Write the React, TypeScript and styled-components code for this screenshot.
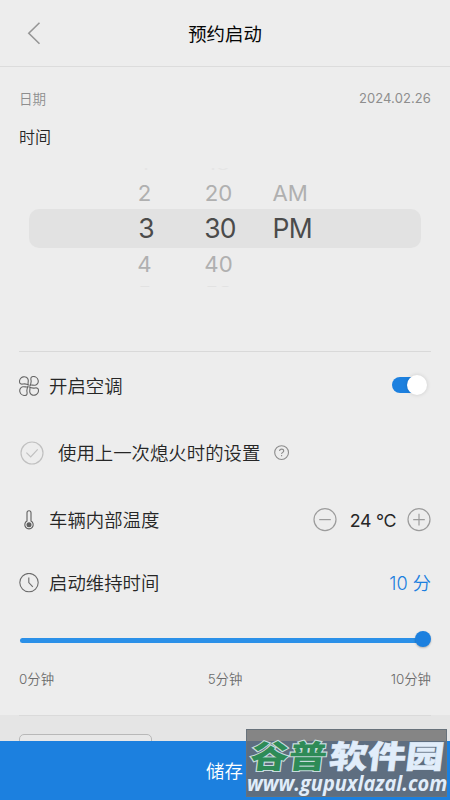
import React from "react";
import styled, { createGlobalStyle } from "styled-components";

const GlobalStyle = createGlobalStyle`
  * { box-sizing: border-box; }
  body {
    margin: 0;
    background: #ededed;
    font-family: Inter, "Noto Sans CJK SC", sans-serif;
    font-weight: 350;
    color: #262626;
  }
`;

const Screen = styled.main`
  position: relative;
  display: flex;
  flex-direction: column;
  width: 450px;
  height: 800px;
  overflow: hidden;
  background: #ededed;
`;

const Header = styled.header`
  display: grid;
  grid-template-columns: 66px 1fr 66px;
  align-items: center;
  height: 67px;
  flex: none;
  border-bottom: 1px solid #dcdcdc;
`;

const BackButton = styled.button`
  display: flex;
  justify-content: center;
  padding: 0 0 0 1px;
  border: 0;
  background: none;
`;

const Title = styled.h1`
  margin: 1px 0 0;
  text-align: center;
  font-size: 18.4px;
  font-weight: 400;
  line-height: 28px;
  color: #050505;
`;

const Body = styled.section`
  display: flex;
  flex-direction: column;
  flex: none;
  height: 648px;
  padding: 0 19px;
`;

const DateRow = styled.div`
  display: flex;
  justify-content: space-between;
  align-items: center;
  height: 30px;
  margin-top: 16px;
  font-size: 13.5px;
  color: #8e8e8e;
`;

const DateValue = styled.span`
  font-size: 13px;
  font-weight: 400;
  letter-spacing: 0.1px;
`;

const TimeLabel = styled.div`
  height: 30px;
  margin-top: 9px;
  font-size: 16px;
  line-height: 31px;
`;

const Picker = styled.div`
  display: flex;
  flex-direction: column;
  height: 200px;
  padding: 16px 10px 0;
  border-bottom: 1px solid #d9d9d9;
`;

type Level = "peekTop" | "peekBottom" | "near" | "selected";

const levelHeight: Record<Level, number> = {
  peekTop: 9,
  near: 32,
  selected: 39,
  peekBottom: 7,
};

const levelColor: Record<Level, string> = {
  peekTop: "#e5e5e5",
  near: "#b0b0b0",
  selected: "#4b4b4b",
  peekBottom: "#e2e2e2",
};

const PickerRow = styled.div<{ $level: Level }>`
  display: grid;
  grid-template-columns: 82px 66px 1fr;
  padding-left: 76px;
  flex: none;
  align-items: ${(p) => (p.$level === "peekTop" ? "end" : p.$level === "peekBottom" ? "start" : "center")};
  height: ${(p) => levelHeight[p.$level]}px;
  overflow: hidden;
  border-radius: ${(p) => (p.$level === "selected" ? "10px" : "0")};
  background: ${(p) => (p.$level === "selected" ? "#e2e2e2" : "transparent")};
  color: ${(p) => levelColor[p.$level]};
  font-size: ${(p) => (p.$level === "selected" ? 26.5 : 22.2)}px;
  font-weight: 390;
  letter-spacing: ${(p) => (p.$level === "selected" ? "-0.7px" : "0")};
  line-height: ${(p) => (p.$level === "selected" ? 30 : 32)}px;
  padding-bottom: ${(p) => (p.$level === "selected" ? 1 : 0)}px;
`;

const PickerCell = styled.span<{ $squash?: boolean; $start?: boolean }>`
  text-align: ${(p) => (p.$start ? "left" : "center")};
  padding-left: ${(p) => (p.$start ? "19.5px" : "0")};
  padding-right: ${(p) => (p.$squash && !p.$start ? "3px" : "0")};
  transform: ${(p) => (p.$squash ? "scaleY(0.94)" : "none")};
`;

const PeekCell = styled.span<{ $edge: "top" | "bottom" }>`
  padding-right: 3px;
  text-align: center;
  line-height: 16px;
  transform: translateY(${(p) => (p.$edge === "top" ? "-10px" : "3px")}) scaleY(0.5);
`;

const OptionRow = styled.div<{ $height: number; $indent?: number; $gap?: number }>`
  display: flex;
  align-items: center;
  flex: none;
  height: ${(p) => p.$height}px;
  padding-left: ${(p) => p.$indent ?? 0}px;
  gap: ${(p) => p.$gap ?? 10}px;
`;

const OptionLabel = styled.span`
  font-size: 18.4px;
  line-height: 28px;
  white-space: nowrap;
`;

const Trailing = styled.div`
  display: flex;
  align-items: center;
  margin-left: auto;
`;

const Toggle = styled.button`
  display: flex;
  align-items: center;
  justify-content: flex-end;
  width: 32px;
  height: 16px;
  margin: 0 7px 1px 0;
  padding: 0;
  border: 0;
  border-radius: 8px;
  background: #1c80df;
`;

const ToggleKnob = styled.span`
  width: 20px;
  height: 20px;
  flex: none;
  margin-right: -3px;
  border-radius: 50%;
  background: #fff;
  box-shadow: 0 0 4px rgba(0, 0, 0, 0.14);
`;

const Temperature = styled.span`
  width: 70px;
  padding-left: 2px;
  text-align: center;
  font-size: 17.8px;
  font-weight: 400;
  letter-spacing: -0.3px;
`;

const StepButton = styled.button`
  display: flex;
  padding: 0;
  border: 0;
  background: none;
`;

const Duration = styled.span`
  font-size: 18.2px;
  line-height: 24px;
  margin-bottom: 1px;
  color: #1c80df;
`;

const Slider = styled.div`
  display: flex;
  align-items: center;
  flex: none;
  height: 16px;
  margin-top: 18px;
`;

const SliderTrack = styled.div`
  flex: 1;
  height: 5px;
  margin: 2px -8px 0 1px;
  border-radius: 3px;
  background: #2b90e8;
`;

const SliderThumb = styled.div`
  width: 16px;
  height: 16px;
  border-radius: 50%;
  background: #1c80df;
  box-shadow: 0 1px 2px rgba(0, 0, 0, 0.25);
`;

const Scale = styled.div`
  display: grid;
  grid-template-columns: 1fr 1fr 1fr;
  margin-top: 22px;
  font-size: 13.4px;
  line-height: 20px;
  color: #6b6b6b;
`;

const ScaleMark = styled.span<{ $align: "left" | "center" | "right" }>`
  text-align: ${(p) => p.$align};
`;

const NextSection = styled.section`
  flex: none;
  display: flex;
  justify-content: space-between;
  height: 26px;
  padding: 0 19px;
  overflow: hidden;
  background: #e5e5e5;
`;

const SectionInner = styled.div`
  display: flex;
  justify-content: space-between;
  flex: 1;
  height: 60px;
  padding-top: 18px;
  border-top: 1px solid #dadada;
`;

const OutlineBox = styled.div`
  width: 133px;
  height: 36px;
  border: 1px solid #b8b8b8;
  border-radius: 5px;
  background: #e8e8e8;
`;

const SaveButton = styled.button`
  flex: 1;
  padding: 0 1px 2px 0;
  border: 0;
  background: #1c80df;
  color: #fff;
  font-family: inherit;
  font-size: 18.4px;
  font-weight: 350;
`;

const Watermark = styled.div`
  position: absolute;
  left: 246px;
  top: 729px;
  width: 201px;
  height: 68px;
  display: flex;
  flex-direction: column;
  border: 1px solid #68727b;
  background: linear-gradient(#858585 0 11px, #5e6e80 11px);
  white-space: nowrap;
`;

const WatermarkName = styled.div`
  display: flex;
  height: 32px;
  margin: 8px 0 0 2px;
  font-family: "Noto Sans CJK SC", sans-serif;
  font-size: 36px;
  font-weight: 900;
  line-height: 32px;
  transform: skewX(-7deg);
  transform-origin: 0 100%;
`;

const WatermarkPart = styled.span<{ $green?: boolean }>`
  display: inline-block;
  color: ${(p) => (p.$green ? "#2e8b57" : "#e1edfa")};
  -webkit-text-stroke: ${(p) => (p.$green ? "2.4px #c7dcdd" : "0.6px #e1edfa")};
  paint-order: stroke fill;
  transform: scale(1.06, 0.88);
  transform-origin: 0 50%;
  margin-right: ${(p) => (p.$green ? "7px" : "0")};
`;

const WatermarkUrl = styled.div`
  height: 24px;
  margin-top: 2px;
  font-family: "Open Sans", "Noto Sans", sans-serif;
  font-size: 20px;
  font-weight: 700;
  font-style: italic;
  line-height: 22px;
  color: #e1edfa;
`;

const UrlText = styled.span`
  display: inline-block;
  transform: scaleY(1.08);
`;

const BackIcon = () => (
  <svg width="14" height="24" viewBox="0 0 14 24" fill="none" stroke="#969696" strokeWidth="1.6">
    <path d="M12.5 1.8 1.8 12.3l10.7 10.5" />
  </svg>
);

const FanIcon = () => (
  <svg width="20" height="20" viewBox="0 0 20 20" fill="none" stroke="#666" strokeWidth="1.1">
    {[0, 90, 180, 270].map((angle) => (
      <path
        key={angle}
        transform={`rotate(${angle} 10 10)`}
        d="M9.7 9.4C8.2 8.4 9.6 6.1 9.2 3.8C8.8 1.4 6.3 .3 4.1 .9C1.8 1.5.4 3.9.5 5.8C.6 7.9 2.2 8.4 4 8C6.1 7.6 7.8 7.7 9.7 9.4Z"
      />
    ))}
  </svg>
);

const CheckCircleIcon = () => (
  <svg width="24" height="24" viewBox="0 0 24 24" fill="none" stroke="#c0c0c0" strokeWidth="1.2">
    <circle cx="12" cy="12" r="11" />
    <path d="m6.4 11.6 4.3 4.3 7-7.6" />
  </svg>
);

const HelpIcon = () => (
  <svg width="16" height="16" viewBox="0 0 16 16" fill="none" stroke="#8b8b8b" strokeWidth="1.1">
    <circle cx="7.6" cy="7.6" r="6.9" />
    <path d="M5.6 6.1C5.6 4.7 6.5 4.1 7.6 4.1s2.1.7 2.1 1.9C9.7 7.4 7.6 7.4 7.6 9M7.6 10.1v1.2" />
  </svg>
);

const ThermometerIcon = () => (
  <svg width="20" height="20" viewBox="0 0 20 20" fill="none" stroke="#606060" strokeWidth="1.1">
    <path d="M8 11V2.8a2 2 0 0 1 4 0V11a4.2 4.2 0 1 1-4 0Z" />
    <circle cx="10" cy="14.7" r="2.5" fill="#606060" stroke="none" />
  </svg>
);

const ClockIcon = () => (
  <svg width="20" height="20" viewBox="0 0 20 20" fill="none" stroke="#6c6c6c" strokeWidth="1.1">
    <circle cx="10" cy="9.6" r="9.2" />
    <path d="M9.8 4.4V9.6l4 4.2" />
  </svg>
);

const StepIcon = ({ plus }: { plus?: boolean }) => (
  <svg width="24" height="24" viewBox="0 0 24 24" fill="none" stroke="#9c9c9c" strokeWidth="1.2">
    <circle cx="12" cy="11.6" r="11" />
    <path d={plus ? "M6.2 11.6h11.6M12 5.8v11.6" : "M6.2 11.6h11.6"} />
  </svg>
);

export default function App() {
  return (
    <Screen>
      <GlobalStyle />
      <Header>
        <BackButton aria-label="返回">
          <BackIcon />
        </BackButton>
        <Title>预约启动</Title>
      </Header>
      <Body>
        <DateRow>
          <span>日期</span>
          <DateValue>2024.02.26</DateValue>
        </DateRow>
        <TimeLabel>时间</TimeLabel>
        <Picker>
          <PickerRow $level="peekTop">
            <PeekCell $edge="top">1</PeekCell>
            <PeekCell $edge="top">10</PeekCell>
          </PickerRow>
          <PickerRow $level="near">
            <PickerCell $squash>2</PickerCell>
            <PickerCell $squash>20</PickerCell>
            <PickerCell $squash $start>AM</PickerCell>
          </PickerRow>
          <PickerRow $level="selected">
            <PickerCell>3</PickerCell>
            <PickerCell>30</PickerCell>
            <PickerCell $start>PM</PickerCell>
          </PickerRow>
          <PickerRow $level="near">
            <PickerCell $squash>4</PickerCell>
            <PickerCell $squash>40</PickerCell>
          </PickerRow>
          <PickerRow $level="peekBottom">
            <PeekCell $edge="bottom">5</PeekCell>
            <PeekCell $edge="bottom">50</PeekCell>
          </PickerRow>
        </Picker>
        <OptionRow $height={67}>
          <FanIcon />
          <OptionLabel>开启空调</OptionLabel>
          <Trailing>
            <Toggle role="switch" aria-checked="true">
              <ToggleKnob />
            </Toggle>
          </Trailing>
        </OptionRow>
        <OptionRow $height={68} $indent={1} $gap={14}>
          <CheckCircleIcon />
          <OptionLabel>使用上一次熄火时的设置</OptionLabel>
          <HelpIcon />
        </OptionRow>
        <OptionRow $height={66}>
          <ThermometerIcon />
          <OptionLabel>车辆内部温度</OptionLabel>
          <Trailing>
            <StepButton aria-label="-">
              <StepIcon />
            </StepButton>
            <Temperature>24 °C</Temperature>
            <StepButton aria-label="+">
              <StepIcon plus />
            </StepButton>
          </Trailing>
        </OptionRow>
        <OptionRow $height={60}>
          <ClockIcon />
          <OptionLabel>启动维持时间</OptionLabel>
          <Trailing>
            <Duration>10 分</Duration>
          </Trailing>
        </OptionRow>
        <Slider>
          <SliderTrack />
          <SliderThumb />
        </Slider>
        <Scale>
          <ScaleMark $align="left">0分钟</ScaleMark>
          <ScaleMark $align="center">5分钟</ScaleMark>
          <ScaleMark $align="right">10分钟</ScaleMark>
        </Scale>
      </Body>
      <NextSection>
        <SectionInner>
          <OutlineBox />
          <OutlineBox />
        </SectionInner>
      </NextSection>
      <SaveButton>储存</SaveButton>
      <Watermark>
        <WatermarkName>
          <WatermarkPart $green>谷普</WatermarkPart>
          <WatermarkPart>软件园</WatermarkPart>
        </WatermarkName>
        <WatermarkUrl>
          <UrlText>www.gupuxlazal.com</UrlText>
        </WatermarkUrl>
      </Watermark>
    </Screen>
  );
}
